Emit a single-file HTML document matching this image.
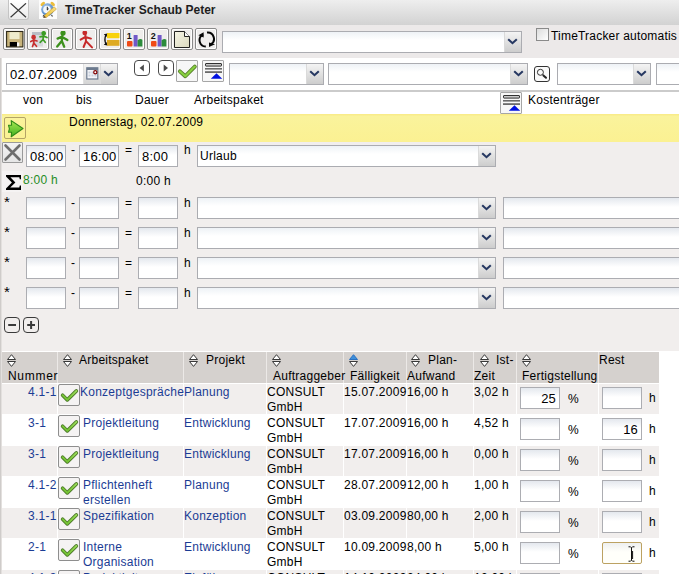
<!DOCTYPE html><html><head><meta charset="utf-8"><style>
*{box-sizing:border-box;margin:0;padding:0}
html,body{width:679px;height:574px;overflow:hidden;background:#F1EEED;font-family:"Liberation Sans",sans-serif;font-size:12px;color:#000;position:relative}
.a{position:absolute}
.t{position:absolute;white-space:nowrap;line-height:14px;letter-spacing:0.25px}
#title{left:0;top:0;width:679px;height:25px;background:linear-gradient(#EEEEEE,#D2D2D2)}
#tool{left:0;top:25px;width:679px;height:33px;background:#ECE9E9}
#daterow{left:0;top:58px;width:679px;height:32px;background:#FFFFFF}
#hline{left:0;top:90px;width:679px;height:2px;background:#CBCBCB}
#hdr{left:0;top:92px;width:679px;height:22px;background:#fff}
#yel{left:0;top:114px;width:679px;height:28px;background:linear-gradient(#F9EC8A 0,#F9EC8A 1px,#FAF39C 2px,#FBF192)}
#lowbg{left:0;top:351px;width:679px;height:223px;background:#fff}
#ledge{left:0;top:58px;width:2px;height:516px;background:linear-gradient(90deg,#CFCCCA 0,#CFCCCA 1px,#E3E0DE 1px)}
.btn{position:absolute;width:22px;height:22px;border:1px solid #8A8A8A;border-radius:2px;background:#EFEDEC;box-shadow:inset 0 0 0 1px #fff}
.btn svg{position:absolute;left:2px;top:2px}
.rbtn{position:absolute;width:16px;height:16px;border:1px solid #4A4A4A;border-radius:4px;background:transparent}
.rbtn svg{position:absolute;left:0;top:0}
.combo{position:absolute;height:22px;border:1px solid #ABACB1;background:linear-gradient(#EEF2F6,#FFFFFF 40%)}
.combo .dd{position:absolute;right:0;top:0;width:17px;height:100%;background:linear-gradient(#F4F4F4,#CDCDCD);border-left:1px solid #DADADA}
.combo .dd svg{position:absolute;left:2px;top:6px}
.inp{position:absolute;width:40px;height:22px;border:1px solid #ACADB2;background:linear-gradient(#E4E8EE,#FFFFFF 45%)}
.th{position:absolute;top:352px;height:31px;background:#D5D1CE}
.cell{position:absolute;height:30px}
.lnk{color:#1B3C94}
.chk{position:absolute;width:22px;height:22px;border:1px solid #8E8E8E;border-radius:2px;background:#F5F3F3}
.chk svg{position:absolute;left:-1px;top:-1px}
</style></head><body>
<div class="a" id="title"></div>
<div class="a" id="tool"></div>
<div class="a" id="daterow"></div>
<div class="a" id="hline"></div>
<div class="a" id="hdr"></div>
<div class="a" id="yel"></div>
<div class="a" id="lowbg"></div>
<div class="a" id="ledge"></div>
<div class="a" style="left:8px;top:0;width:21px;height:20px;border:1px solid #C4C4C4;border-top:none;border-radius:0 0 3px 3px;background:linear-gradient(#FFFFFF,#EBEBEB)">
<svg class="a" style="left:1px;top:3px" width="17" height="15" viewBox="0 0 17 15"><path d="M0.6 0.3L16 14.2M16 0.3L0.6 14.2" stroke="#3A3A3A" stroke-width="1.2"/></svg></div>
<div class="a" style="left:39px;top:0;width:18px;height:19px;background:#FCFCFC">
<svg class="a" style="left:0;top:0" width="18" height="19" viewBox="0 0 18 19">
<defs><radialGradient id="cg" cx=".4" cy=".35" r=".7"><stop offset="0" stop-color="#B8D4F0"/><stop offset="1" stop-color="#3E78C0"/></radialGradient>
<linearGradient id="pg" x1="0" y1="1" x2="1" y2="0"><stop offset="0" stop-color="#F0C030"/><stop offset="1" stop-color="#F8E088"/></linearGradient></defs>
<ellipse cx="3.8" cy="4" rx="2.6" ry="1.5" transform="rotate(-40 3.8 4)" fill="#EDBE3C"/>
<ellipse cx="13.7" cy="4" rx="2.6" ry="1.5" transform="rotate(40 13.7 4)" fill="#EDBE3C"/>
<path d="M4 16.5L5 15M13.5 16.5L12.5 15" stroke="#444" stroke-width="1.2"/>
<circle cx="8.5" cy="9.6" r="6.3" fill="url(#cg)"/>
<circle cx="8" cy="9.6" r="3.8" fill="#F4F8FC"/>
<path d="M8.3 6.8V10L9.6 8.8" stroke="#222" stroke-width="1" fill="none"/>
<path d="M5 15.8L15.2 6.8L17.4 9.2L7.3 17.6Z" fill="url(#pg)" stroke="#C89A30" stroke-width=".6"/>
<path d="M5 15.8L4.2 18L7.3 17.6Z" fill="#5A4020"/>
</svg></div>
<div class="t" style="left:65px;top:3px;font-weight:bold;font-size:12px;color:#1E1E1E;letter-spacing:0">TimeTracker Schaub Peter</div>
<div class="btn" style="left:3px;top:28px"><svg width="18" height="18" viewBox="0 0 18 18"><rect x="0.6" y="0.5" width="16.3" height="15.4" fill="#C8B47C" stroke="#2E2818" stroke-width="1.1"/><rect x="3.5" y="1.1" width="10" height="7" fill="#EFEBCD"/><rect x="3.8" y="11" width="7.2" height="4.6" fill="#000"/><rect x="11" y="11.5" width="2.3" height="3.8" fill="#F6F6F6"/></svg></div>
<div class="btn" style="left:27px;top:28px"><svg width="18" height="18" viewBox="0 0 18 18"><rect x="2" y="1" width="11" height="14.5" fill="#D6D8DC"/><rect x="2" y="1" width="11" height="3" fill="#B8BCC4"/><g stroke="#C83030" stroke-width="1.7" fill="none" stroke-linecap="round" stroke-linejoin="round"><circle cx="3.6" cy="6.2" r="1.5" fill="#C83030"/><path d="M3.8 7.5V12L2.5 15.5M3.8 12L6.5 15.3M0.8 10.5L3.8 9L7 10"/></g><g stroke="#3C9C24" stroke-width="1.7" fill="none" stroke-linecap="round" stroke-linejoin="round"><circle cx="13.7" cy="2.3" r="1.5" fill="#3C9C24"/><path d="M13.6 3.6L13 8.5L10.2 11.3M13 8.5L15.2 11.3M10 5.8L13.5 5L17 6.5"/></g></svg></div>
<div class="btn" style="left:51px;top:28px"><svg width="18" height="18" viewBox="0 0 18 18"><g stroke="#3C901C" stroke-width="2.3" fill="none" stroke-linecap="round" stroke-linejoin="round"><circle cx="9" cy="2.1" r="1.5" fill="#3C901C"/><path d="M8.4 4.5L7.8 10L3.2 15.6M7.8 10L9 12.8L10.2 15.8M3.6 7.6L7.6 5.8L13.4 9"/></g></svg></div>
<div class="btn" style="left:75px;top:28px"><svg width="18" height="18" viewBox="0 0 18 18"><g stroke="#C62A2A" stroke-width="2" fill="none" stroke-linecap="round" stroke-linejoin="round"><circle cx="6.8" cy="1.9" r="1.4" fill="#C62A2A"/><path d="M7.4 4.2L8 10.2L5.6 16M8 10.2L10.2 12.4L14 16.4M2.6 8.6L7.4 6L13 7.6"/></g></svg></div>
<div class="btn" style="left:99px;top:28px"><svg width="18" height="18" viewBox="0 0 18 18"><rect x="5" y="2" width="12.5" height="5.2" fill="#F8D20C"/><rect x="5" y="9" width="12.5" height="5.8" fill="#DEAA22"/><path d="M4.2 3.5Q1.6 8.5 4.2 13.5" stroke="#111" stroke-width="1.3" fill="none"/><path d="M1.8 3.2L5.2 2.6L4.6 6Z M1.8 13.8L5.2 14.4L4.6 11Z" fill="#111"/></svg></div>
<div class="btn" style="left:123px;top:28px"><svg width="18" height="18" viewBox="0 0 18 18"><text x="0.8" y="7.5" font-family="Liberation Sans" font-weight="bold" font-size="9" fill="#111">1</text><rect x="1" y="10" width="5.5" height="5.5" rx="1" fill="#F04A16"/><rect x="7.6" y="4" width="4" height="11.5" rx=".5" fill="#7058C8"/><path d="M11.6 9.2Q14.5 7 16.4 8.8V15.5H11.6Z" fill="#2C8C3C"/></svg></div>
<div class="btn" style="left:147px;top:28px"><svg width="18" height="18" viewBox="0 0 18 18"><text x="0.8" y="7.5" font-family="Liberation Sans" font-weight="bold" font-size="9" fill="#111">2</text><rect x="1" y="10" width="5.5" height="5.5" rx="1" fill="#F04A16"/><rect x="7.6" y="4" width="4" height="11.5" rx=".5" fill="#7058C8"/><path d="M11.6 9.2Q14.5 7 16.4 8.8V15.5H11.6Z" fill="#2C8C3C"/></svg></div>
<div class="btn" style="left:171px;top:28px"><svg width="18" height="18" viewBox="0 0 18 18"><defs><linearGradient id="dg" x1="0" y1="0" x2="1" y2="1"><stop offset="0" stop-color="#F6F5E6"/><stop offset="1" stop-color="#DAD8BE"/></linearGradient></defs><path d="M0.5 0.5H10.5L15.5 5.5V16.5H0.5Z" fill="url(#dg)" stroke="#222" stroke-width="1"/><path d="M10.5 0.5V5.5H15.5" fill="#FAFAFA" stroke="#222" stroke-width="1"/></svg></div>
<div class="btn" style="left:195px;top:28px"><svg width="18" height="18" viewBox="0 0 18 18"><g fill="none" stroke="#050505" stroke-width="2"><path d="M5.2 3.6A6.3 6.3 0 0 0 7.8 15.6"/><path d="M9 1.6A6.3 6.3 0 0 1 13 13.2"/></g><path d="M0.4 4.2L5.6 1.2L5.6 6.6Z" fill="#050505"/><path d="M11 11.5L17 13.3L11 16Z" fill="#050505"/></svg></div>
<div class="combo" style="left:222px;top:31px;width:300px;height:22px"><div class="dd"><svg width="11" height="7" viewBox="0 0 11 7"><path d="M1.2 1.3L5.5 5.2L9.8 1.3" stroke="#263862" stroke-width="2.1" fill="none"/></svg></div></div>
<div class="a" style="left:536px;top:28px;width:13px;height:13px;border:1px solid #8A8A8A;background:linear-gradient(135deg,#DCDCDC,#FFFFFF)"></div>
<div class="t" style="left:551px;top:29px;letter-spacing:0.2px">TimeTracker automatis</div>
<div class="combo" style="left:6px;top:63px;width:112px;height:22px;background:#fff"><div class="t" style="left:3px;top:4px;font-size:13px;letter-spacing:0.2px">02.07.2009</div><div class="a" style="left:76px;top:0;width:17px;height:20px;background:linear-gradient(#F4F4F4,#D4D4D4);border-left:1px solid #E0E0E0"><svg style="position:absolute;left:2px;top:3px" width="13" height="13" viewBox="0 0 13 13"><rect x="0.8" y="0.8" width="11" height="11.2" fill="#F4F6FA" stroke="#6C7A8E" stroke-width="1.2"/><rect x="0.8" y="0.8" width="11" height="2.2" fill="#6C7A8E"/><g fill="#C8D0DC"><rect x="2.5" y="4.5" width="2" height="2"/><rect x="5.5" y="4.5" width="2" height="2"/><rect x="2.5" y="7.5" width="2" height="2"/><rect x="5.5" y="7.5" width="2" height="2"/><rect x="8.5" y="7.5" width="2" height="2"/></g><circle cx="9.3" cy="5.2" r="1.6" fill="#fff" stroke="#800000" stroke-width="1.2"/></svg></div><div class="dd"><svg width="11" height="7" viewBox="0 0 11 7"><path d="M1.2 1.3L5.5 5.2L9.8 1.3" stroke="#263862" stroke-width="2.1" fill="none"/></svg></div></div>
<div class="rbtn" style="left:134px;top:60px"><svg width="16" height="16" viewBox="0 0 16 16"><path d="M4.6 6.9L8.9 3.4V10.4Z" fill="#4A4A4A"/></svg></div>
<div class="rbtn" style="left:158px;top:60px"><svg width="16" height="16" viewBox="0 0 16 16"><path d="M9 6.9L4.7 3.4V10.4Z" fill="#4A4A4A"/></svg></div>
<div class="a" style="left:176px;top:60px;width:22px;height:22px;border:1px solid #A6A6A6;border-radius:1px;background:#F7F7F7"><svg style="position:absolute;left:-1px;top:-1px" width="22" height="22" viewBox="0 0 22 22"><path d="M3.9 11.4L9.3 16.2L18.8 6.6" stroke="#567E2A" stroke-width="3.9" fill="none" stroke-linecap="round" stroke-linejoin="round"/><path d="M3.9 11.4L9.3 16.2L18.8 6.6" stroke="#88D040" stroke-width="2.2" fill="none" stroke-linecap="round" stroke-linejoin="round"/></svg></div>
<div class="a" style="left:202px;top:60px;width:22px;height:22px;border:1px solid #A6A6A6;border-radius:1px;background:#F7F7F7"><svg style="position:absolute;left:-1px;top:-1px" width="22" height="22" viewBox="0 0 22 22"><rect x="3.5" y="3.5" width="16" height="2.6" rx=".5" fill="#C8C8C8" stroke="#303030" stroke-width="1"/><rect x="3" y="8" width="17" height="1.6" fill="#6A6A6A"/><rect x="3" y="11.2" width="17" height="1.8" fill="#6A6A6A"/><path d="M8.8 18.8L14.5 13.3L20.2 18.8Z" fill="#0010E0"/></svg></div>
<div class="combo" style="left:229px;top:63px;width:95px;height:22px"><div class="dd"><svg width="11" height="7" viewBox="0 0 11 7"><path d="M1.2 1.3L5.5 5.2L9.8 1.3" stroke="#263862" stroke-width="2.1" fill="none"/></svg></div></div>
<div class="combo" style="left:328px;top:63px;width:200px;height:22px"><div class="dd"><svg width="11" height="7" viewBox="0 0 11 7"><path d="M1.2 1.3L5.5 5.2L9.8 1.3" stroke="#263862" stroke-width="2.1" fill="none"/></svg></div></div>
<div class="rbtn" style="left:534px;top:66px;border-color:#333;background:#FAFAFA;border-radius:3px"><svg width="16" height="16" viewBox="0 0 16 16"><circle cx="5.4" cy="5.3" r="3" fill="none" stroke="#333" stroke-width="1"/><path d="M8.4 8.4L11 10.8" stroke="#222" stroke-width="2" stroke-linecap="round"/></svg></div>
<div class="combo" style="left:557px;top:63px;width:94px;height:22px"><div class="dd"><svg width="11" height="7" viewBox="0 0 11 7"><path d="M1.2 1.3L5.5 5.2L9.8 1.3" stroke="#263862" stroke-width="2.1" fill="none"/></svg></div></div>
<div class="combo" style="left:656px;top:63px;width:40px;height:22px"></div>
<div class="t" style="left:23px;top:93px;">von</div>
<div class="t" style="left:76px;top:93px;">bis</div>
<div class="t" style="left:135px;top:93px;">Dauer</div>
<div class="t" style="left:194px;top:93px;">Arbeitspaket</div>
<div class="a" style="left:500px;top:92px;width:22px;height:22px;border:1px solid #A6A6A6;border-radius:1px;background:#F7F7F7"><svg style="position:absolute;left:-1px;top:-1px" width="22" height="22" viewBox="0 0 22 22"><rect x="3.5" y="3.5" width="16" height="2.6" rx=".5" fill="#C8C8C8" stroke="#303030" stroke-width="1"/><rect x="3" y="8" width="17" height="1.6" fill="#6A6A6A"/><rect x="3" y="11.2" width="17" height="1.8" fill="#6A6A6A"/><path d="M8.8 18.8L14.5 13.3L20.2 18.8Z" fill="#0010E0"/></svg></div>
<div class="t" style="left:528px;top:93px;">Kostenträger</div>
<div class="a" style="left:4px;top:117px;width:22px;height:22px;border:1px solid #B4A466;border-radius:2px"><svg style="position:absolute;left:-1px;top:-1px" width="22" height="22" viewBox="0 0 22 22"><defs><linearGradient id="ag" x1="0" y1="0" x2="0" y2="1"><stop offset="0" stop-color="#A8E850"/><stop offset="1" stop-color="#40B020"/></linearGradient></defs><path d="M4.5 8.2H7.6L7.2 3.6L19 11.5L7.2 19.8L7.6 15.2H4.5L5.4 11.8Z" fill="url(#ag)" stroke="#2E8A18" stroke-width="1.1" stroke-linejoin="round"/></svg></div>
<div class="t" style="left:69px;top:115px;">Donnerstag, 02.07.2009</div>
<div class="a" style="left:2px;top:142px;width:21px;height:21px;border:1px solid #9A9A9A;border-radius:1px;background:linear-gradient(#F2F2F2,#E6E6E6)"><svg style="position:absolute;left:-1px;top:-1px" width="21" height="21" viewBox="0 0 21 21"><path d="M3.5 3.5L17.5 17.5M17.5 3.5L3.5 17.5" stroke="#6E6E6E" stroke-width="2.6" stroke-linecap="round"/></svg></div>
<div class="a" style="left:2px;top:171px;width:21px;height:21px;background:#F5F3F3"></div>
<svg class="a" style="left:5px;top:174px" width="17" height="17" viewBox="0 0 17 17"><path d="M1 1H16V5.2H14.8L14.3 3.3H5.4L10.4 8.4L5.2 13.6H14.3L14.8 11.6H16V15.9H1V14.4L6.9 8.4L1 2.4Z" fill="#000"/></svg>
<div class="inp" style="left:26px;top:145px;width:40px;height:22px;"><div class="t" style="left:3px;top:4px;font-size:13px;letter-spacing:0.2px">08:00</div></div>
<div class="t" style="left:71px;top:143px;">-</div>
<div class="inp" style="left:79px;top:145px;width:40px;height:22px;"><div class="t" style="left:3px;top:4px;font-size:13px;letter-spacing:0.2px">16:00</div></div>
<div class="t" style="left:125px;top:143px;">=</div>
<div class="inp" style="left:138px;top:145px;width:40px;height:22px;"><div class="t" style="left:3px;top:4px;font-size:13px;letter-spacing:0.2px">8:00</div></div>
<div class="t" style="left:184px;top:143px;">h</div>
<div class="combo" style="left:197px;top:145px;width:299px;height:22px"><div class="t" style="left:2px;top:3px">Urlaub</div><div class="dd"><svg width="11" height="7" viewBox="0 0 11 7"><path d="M1.2 1.3L5.5 5.2L9.8 1.3" stroke="#263862" stroke-width="2.1" fill="none"/></svg></div></div>
<div class="t" style="left:23px;top:173px;color:#268C26">8:00 h</div>
<div class="t" style="left:136px;top:174px;">0:00 h</div>
<div class="t" style="left:4px;top:195px;font-size:15px">*</div>
<div class="inp" style="left:26px;top:197px;width:40px;height:22px;"></div>
<div class="t" style="left:71px;top:196px;">-</div>
<div class="inp" style="left:79px;top:197px;width:40px;height:22px;"></div>
<div class="t" style="left:125px;top:196px;">=</div>
<div class="inp" style="left:138px;top:197px;width:40px;height:22px;"></div>
<div class="t" style="left:184px;top:196px;">h</div>
<div class="combo" style="left:197px;top:197px;width:299px;height:22px"><div class="dd"><svg width="11" height="7" viewBox="0 0 11 7"><path d="M1.2 1.3L5.5 5.2L9.8 1.3" stroke="#263862" stroke-width="2.1" fill="none"/></svg></div></div>
<div class="inp" style="left:503px;top:197px;width:200px;height:22px"></div>
<div class="t" style="left:4px;top:225px;font-size:15px">*</div>
<div class="inp" style="left:26px;top:227px;width:40px;height:22px;"></div>
<div class="t" style="left:71px;top:226px;">-</div>
<div class="inp" style="left:79px;top:227px;width:40px;height:22px;"></div>
<div class="t" style="left:125px;top:226px;">=</div>
<div class="inp" style="left:138px;top:227px;width:40px;height:22px;"></div>
<div class="t" style="left:184px;top:226px;">h</div>
<div class="combo" style="left:197px;top:227px;width:299px;height:22px"><div class="dd"><svg width="11" height="7" viewBox="0 0 11 7"><path d="M1.2 1.3L5.5 5.2L9.8 1.3" stroke="#263862" stroke-width="2.1" fill="none"/></svg></div></div>
<div class="inp" style="left:503px;top:227px;width:200px;height:22px"></div>
<div class="t" style="left:4px;top:255px;font-size:15px">*</div>
<div class="inp" style="left:26px;top:257px;width:40px;height:22px;"></div>
<div class="t" style="left:71px;top:256px;">-</div>
<div class="inp" style="left:79px;top:257px;width:40px;height:22px;"></div>
<div class="t" style="left:125px;top:256px;">=</div>
<div class="inp" style="left:138px;top:257px;width:40px;height:22px;"></div>
<div class="t" style="left:184px;top:256px;">h</div>
<div class="combo" style="left:197px;top:257px;width:299px;height:22px"><div class="dd"><svg width="11" height="7" viewBox="0 0 11 7"><path d="M1.2 1.3L5.5 5.2L9.8 1.3" stroke="#263862" stroke-width="2.1" fill="none"/></svg></div></div>
<div class="inp" style="left:503px;top:257px;width:200px;height:22px"></div>
<div class="t" style="left:4px;top:285px;font-size:15px">*</div>
<div class="inp" style="left:26px;top:287px;width:40px;height:22px;"></div>
<div class="t" style="left:71px;top:286px;">-</div>
<div class="inp" style="left:79px;top:287px;width:40px;height:22px;"></div>
<div class="t" style="left:125px;top:286px;">=</div>
<div class="inp" style="left:138px;top:287px;width:40px;height:22px;"></div>
<div class="t" style="left:184px;top:286px;">h</div>
<div class="combo" style="left:197px;top:287px;width:299px;height:22px"><div class="dd"><svg width="11" height="7" viewBox="0 0 11 7"><path d="M1.2 1.3L5.5 5.2L9.8 1.3" stroke="#263862" stroke-width="2.1" fill="none"/></svg></div></div>
<div class="inp" style="left:503px;top:287px;width:200px;height:22px"></div>
<div class="rbtn" style="left:4px;top:317px;border-color:#3A3A3A;background:transparent"><svg width="16" height="16" viewBox="0 0 16 16"><rect x="3.2" y="6" width="7.8" height="2" fill="#3A3A3A"/></svg></div>
<div class="rbtn" style="left:23px;top:317px;border-color:#3A3A3A;background:transparent"><svg width="16" height="16" viewBox="0 0 16 16"><rect x="3.2" y="6" width="7.8" height="2" fill="#3A3A3A"/><rect x="6.1" y="3" width="2" height="8" fill="#3A3A3A"/></svg></div>
<div class="th" style="left:2px;width:55px"></div>
<div class="th" style="left:58px;width:125px"></div>
<div class="th" style="left:184px;width:82px"></div>
<div class="th" style="left:267px;width:76px"></div>
<div class="th" style="left:344px;width:62px"></div>
<div class="th" style="left:407px;width:66px"></div>
<div class="th" style="left:474px;width:42px"></div>
<div class="th" style="left:517px;width:81px"></div>
<div class="th" style="left:599px;width:60px"></div>
<div class="a" style="left:57px;top:352px;width:1px;height:31px;background:#ECE9E7"></div>
<div class="a" style="left:183px;top:352px;width:1px;height:31px;background:#ECE9E7"></div>
<div class="a" style="left:266px;top:352px;width:1px;height:31px;background:#ECE9E7"></div>
<div class="a" style="left:343px;top:352px;width:1px;height:31px;background:#ECE9E7"></div>
<div class="a" style="left:406px;top:352px;width:1px;height:31px;background:#ECE9E7"></div>
<div class="a" style="left:473px;top:352px;width:1px;height:31px;background:#ECE9E7"></div>
<div class="a" style="left:516px;top:352px;width:1px;height:31px;background:#ECE9E7"></div>
<div class="a" style="left:598px;top:352px;width:1px;height:31px;background:#ECE9E7"></div>
<svg class="a" style="left:7px;top:354px" width="10" height="14" viewBox="0 0 10 14"><path d="M0.5 5.5L4.5 0.7L8.5 5.5Z" fill="#FFFFFF" stroke="#383838" stroke-width="1"/><path d="M0.5 7.5L4.5 12.4L8.5 7.5Z" fill="#FFFFFF" stroke="#383838" stroke-width="1"/></svg>
<div class="t" style="left:8px;top:369px;letter-spacing:0.7px">Nummer</div>
<svg class="a" style="left:63px;top:354px" width="10" height="14" viewBox="0 0 10 14"><path d="M0.5 5.5L4.5 0.7L8.5 5.5Z" fill="#FFFFFF" stroke="#383838" stroke-width="1"/><path d="M0.5 7.5L4.5 12.4L8.5 7.5Z" fill="#FFFFFF" stroke="#383838" stroke-width="1"/></svg>
<div class="t" style="left:79px;top:353px;">Arbeitspaket</div>
<svg class="a" style="left:189px;top:354px" width="10" height="14" viewBox="0 0 10 14"><path d="M0.5 5.5L4.5 0.7L8.5 5.5Z" fill="#FFFFFF" stroke="#383838" stroke-width="1"/><path d="M0.5 7.5L4.5 12.4L8.5 7.5Z" fill="#FFFFFF" stroke="#383838" stroke-width="1"/></svg>
<div class="t" style="left:206px;top:353px;">Projekt</div>
<svg class="a" style="left:272px;top:354px" width="10" height="14" viewBox="0 0 10 14"><path d="M0.5 5.5L4.5 0.7L8.5 5.5Z" fill="#FFFFFF" stroke="#383838" stroke-width="1"/><path d="M0.5 7.5L4.5 12.4L8.5 7.5Z" fill="#FFFFFF" stroke="#383838" stroke-width="1"/></svg>
<div class="t" style="left:273px;top:369px;">Auftraggeber</div>
<svg class="a" style="left:349px;top:354px" width="10" height="14" viewBox="0 0 10 14"><path d="M0.5 5.5L4.5 0.7L8.5 5.5Z" fill="#3E8FDA" stroke="#2A70C0" stroke-width="1"/><path d="M0.5 7.5L4.5 12.4L8.5 7.5Z" fill="#FFFFFF" stroke="#383838" stroke-width="1"/></svg>
<div class="t" style="left:350px;top:369px;">Fälligkeit</div>
<svg class="a" style="left:411px;top:354px" width="10" height="14" viewBox="0 0 10 14"><path d="M0.5 5.5L4.5 0.7L8.5 5.5Z" fill="#FFFFFF" stroke="#383838" stroke-width="1"/><path d="M0.5 7.5L4.5 12.4L8.5 7.5Z" fill="#FFFFFF" stroke="#383838" stroke-width="1"/></svg>
<div class="t" style="left:428px;top:353px;">Plan-</div>
<div class="t" style="left:407px;top:369px;">Aufwand</div>
<svg class="a" style="left:480px;top:354px" width="10" height="14" viewBox="0 0 10 14"><path d="M0.5 5.5L4.5 0.7L8.5 5.5Z" fill="#FFFFFF" stroke="#383838" stroke-width="1"/><path d="M0.5 7.5L4.5 12.4L8.5 7.5Z" fill="#FFFFFF" stroke="#383838" stroke-width="1"/></svg>
<div class="t" style="left:496px;top:353px;">Ist-</div>
<div class="t" style="left:474px;top:369px;">Zeit</div>
<svg class="a" style="left:522px;top:354px" width="10" height="14" viewBox="0 0 10 14"><path d="M0.5 5.5L4.5 0.7L8.5 5.5Z" fill="#FFFFFF" stroke="#383838" stroke-width="1"/><path d="M0.5 7.5L4.5 12.4L8.5 7.5Z" fill="#FFFFFF" stroke="#383838" stroke-width="1"/></svg>
<div class="t" style="left:522px;top:369px;">Fertigstellung</div>
<div class="t" style="left:599px;top:353px;">Rest</div>
<div class="cell" style="left:2px;top:384px;width:55px;height:30px;background:#F1EEED"></div>
<div class="cell" style="left:58px;top:384px;width:125px;height:30px;background:#F1EEED"></div>
<div class="cell" style="left:184px;top:384px;width:82px;height:30px;background:#F1EEED"></div>
<div class="cell" style="left:267px;top:384px;width:76px;height:30px;background:#F1EEED"></div>
<div class="cell" style="left:344px;top:384px;width:62px;height:30px;background:#F1EEED"></div>
<div class="cell" style="left:407px;top:384px;width:66px;height:30px;background:#F1EEED"></div>
<div class="cell" style="left:474px;top:384px;width:42px;height:30px;background:#F1EEED"></div>
<div class="cell" style="left:517px;top:384px;width:81px;height:30px;background:#F1EEED"></div>
<div class="cell" style="left:599px;top:384px;width:60px;height:30px;background:#F1EEED"></div>
<div class="t" style="left:28px;top:385px;color:#1B3C94">4.1-1</div>
<div class="chk" style="left:58px;top:384px"><svg width="22" height="22" viewBox="0 0 22 22"><defs><linearGradient id="kg" x1="0" y1="1" x2="1" y2="0"><stop offset="0" stop-color="#6CC02C"/><stop offset="1" stop-color="#9ADC58"/></linearGradient></defs><path d="M4.6 11.2L9.3 15.9L18.4 6.9" stroke="#4E7A2A" stroke-width="3.6" fill="none" stroke-linecap="round" stroke-linejoin="round"/><path d="M4.6 11.2L9.3 15.9L18.4 6.9" stroke="url(#kg)" stroke-width="1.9" fill="none" stroke-linecap="round" stroke-linejoin="round"/></svg></div>
<div class="t" style="left:80px;top:385px;color:#1B3C94">Konzeptgespräche</div>
<div class="t" style="left:184px;top:385px;color:#1B3C94">Planung</div>
<div class="t" style="left:267px;top:385px;">CONSULT</div>
<div class="t" style="left:267px;top:400px;">GmbH</div>
<div class="t" style="left:344px;top:385px;">15.07.2009</div>
<div class="t" style="left:407px;top:385px;">16,00 h</div>
<div class="t" style="left:474px;top:385px;">3,02 h</div>
<div class="inp" style="left:520px;top:387px;width:40px;height:22px;"><div class="t" style="right:3px;top:4px;font-size:13px;letter-spacing:0.2px">25</div></div>
<div class="t" style="left:568px;top:392px;">%</div>
<div class="inp" style="left:602px;top:387px;width:40px;height:22px;"></div>
<div class="t" style="left:649px;top:391px;">h</div>
<div class="t" style="left:28px;top:416px;color:#1B3C94">3-1</div>
<div class="chk" style="left:58px;top:415px"><svg width="22" height="22" viewBox="0 0 22 22"><defs><linearGradient id="kg" x1="0" y1="1" x2="1" y2="0"><stop offset="0" stop-color="#6CC02C"/><stop offset="1" stop-color="#9ADC58"/></linearGradient></defs><path d="M4.6 11.2L9.3 15.9L18.4 6.9" stroke="#4E7A2A" stroke-width="3.6" fill="none" stroke-linecap="round" stroke-linejoin="round"/><path d="M4.6 11.2L9.3 15.9L18.4 6.9" stroke="url(#kg)" stroke-width="1.9" fill="none" stroke-linecap="round" stroke-linejoin="round"/></svg></div>
<div class="t" style="left:83px;top:416px;color:#1B3C94">Projektleitung</div>
<div class="t" style="left:184px;top:416px;color:#1B3C94">Entwicklung</div>
<div class="t" style="left:267px;top:416px;">CONSULT</div>
<div class="t" style="left:267px;top:431px;">GmbH</div>
<div class="t" style="left:344px;top:416px;">17.07.2009</div>
<div class="t" style="left:407px;top:416px;">16,00 h</div>
<div class="t" style="left:474px;top:416px;">4,52 h</div>
<div class="inp" style="left:520px;top:418px;width:40px;height:22px;"></div>
<div class="t" style="left:568px;top:423px;">%</div>
<div class="inp" style="left:602px;top:418px;width:40px;height:22px;"><div class="t" style="right:3px;top:4px;font-size:13px;letter-spacing:0.2px">16</div></div>
<div class="t" style="left:649px;top:422px;">h</div>
<div class="cell" style="left:2px;top:446px;width:55px;height:30px;background:#F1EEED"></div>
<div class="cell" style="left:58px;top:446px;width:125px;height:30px;background:#F1EEED"></div>
<div class="cell" style="left:184px;top:446px;width:82px;height:30px;background:#F1EEED"></div>
<div class="cell" style="left:267px;top:446px;width:76px;height:30px;background:#F1EEED"></div>
<div class="cell" style="left:344px;top:446px;width:62px;height:30px;background:#F1EEED"></div>
<div class="cell" style="left:407px;top:446px;width:66px;height:30px;background:#F1EEED"></div>
<div class="cell" style="left:474px;top:446px;width:42px;height:30px;background:#F1EEED"></div>
<div class="cell" style="left:517px;top:446px;width:81px;height:30px;background:#F1EEED"></div>
<div class="cell" style="left:599px;top:446px;width:60px;height:30px;background:#F1EEED"></div>
<div class="t" style="left:28px;top:447px;color:#1B3C94">3-1</div>
<div class="chk" style="left:58px;top:446px"><svg width="22" height="22" viewBox="0 0 22 22"><defs><linearGradient id="kg" x1="0" y1="1" x2="1" y2="0"><stop offset="0" stop-color="#6CC02C"/><stop offset="1" stop-color="#9ADC58"/></linearGradient></defs><path d="M4.6 11.2L9.3 15.9L18.4 6.9" stroke="#4E7A2A" stroke-width="3.6" fill="none" stroke-linecap="round" stroke-linejoin="round"/><path d="M4.6 11.2L9.3 15.9L18.4 6.9" stroke="url(#kg)" stroke-width="1.9" fill="none" stroke-linecap="round" stroke-linejoin="round"/></svg></div>
<div class="t" style="left:83px;top:447px;color:#1B3C94">Projektleitung</div>
<div class="t" style="left:184px;top:447px;color:#1B3C94">Entwicklung</div>
<div class="t" style="left:267px;top:447px;">CONSULT</div>
<div class="t" style="left:267px;top:462px;">GmbH</div>
<div class="t" style="left:344px;top:447px;">17.07.2009</div>
<div class="t" style="left:407px;top:447px;">16,00 h</div>
<div class="t" style="left:474px;top:447px;">0,00 h</div>
<div class="inp" style="left:520px;top:449px;width:40px;height:22px;"></div>
<div class="t" style="left:568px;top:454px;">%</div>
<div class="inp" style="left:602px;top:449px;width:40px;height:22px;"></div>
<div class="t" style="left:649px;top:453px;">h</div>
<div class="t" style="left:28px;top:478px;color:#1B3C94">4.1-2</div>
<div class="chk" style="left:58px;top:477px"><svg width="22" height="22" viewBox="0 0 22 22"><defs><linearGradient id="kg" x1="0" y1="1" x2="1" y2="0"><stop offset="0" stop-color="#6CC02C"/><stop offset="1" stop-color="#9ADC58"/></linearGradient></defs><path d="M4.6 11.2L9.3 15.9L18.4 6.9" stroke="#4E7A2A" stroke-width="3.6" fill="none" stroke-linecap="round" stroke-linejoin="round"/><path d="M4.6 11.2L9.3 15.9L18.4 6.9" stroke="url(#kg)" stroke-width="1.9" fill="none" stroke-linecap="round" stroke-linejoin="round"/></svg></div>
<div class="t" style="left:83px;top:478px;color:#1B3C94">Pflichtenheft</div>
<div class="t" style="left:83px;top:493px;color:#1B3C94">erstellen</div>
<div class="t" style="left:184px;top:478px;color:#1B3C94">Planung</div>
<div class="t" style="left:267px;top:478px;">CONSULT</div>
<div class="t" style="left:267px;top:493px;">GmbH</div>
<div class="t" style="left:344px;top:478px;">28.07.2009</div>
<div class="t" style="left:407px;top:478px;">12,00 h</div>
<div class="t" style="left:474px;top:478px;">1,00 h</div>
<div class="inp" style="left:520px;top:480px;width:40px;height:22px;"></div>
<div class="t" style="left:568px;top:485px;">%</div>
<div class="inp" style="left:602px;top:480px;width:40px;height:22px;"></div>
<div class="t" style="left:649px;top:484px;">h</div>
<div class="cell" style="left:2px;top:508px;width:55px;height:30px;background:#F1EEED"></div>
<div class="cell" style="left:58px;top:508px;width:125px;height:30px;background:#F1EEED"></div>
<div class="cell" style="left:184px;top:508px;width:82px;height:30px;background:#F1EEED"></div>
<div class="cell" style="left:267px;top:508px;width:76px;height:30px;background:#F1EEED"></div>
<div class="cell" style="left:344px;top:508px;width:62px;height:30px;background:#F1EEED"></div>
<div class="cell" style="left:407px;top:508px;width:66px;height:30px;background:#F1EEED"></div>
<div class="cell" style="left:474px;top:508px;width:42px;height:30px;background:#F1EEED"></div>
<div class="cell" style="left:517px;top:508px;width:81px;height:30px;background:#F1EEED"></div>
<div class="cell" style="left:599px;top:508px;width:60px;height:30px;background:#F1EEED"></div>
<div class="t" style="left:28px;top:509px;color:#1B3C94">3.1-1</div>
<div class="chk" style="left:58px;top:508px"><svg width="22" height="22" viewBox="0 0 22 22"><defs><linearGradient id="kg" x1="0" y1="1" x2="1" y2="0"><stop offset="0" stop-color="#6CC02C"/><stop offset="1" stop-color="#9ADC58"/></linearGradient></defs><path d="M4.6 11.2L9.3 15.9L18.4 6.9" stroke="#4E7A2A" stroke-width="3.6" fill="none" stroke-linecap="round" stroke-linejoin="round"/><path d="M4.6 11.2L9.3 15.9L18.4 6.9" stroke="url(#kg)" stroke-width="1.9" fill="none" stroke-linecap="round" stroke-linejoin="round"/></svg></div>
<div class="t" style="left:83px;top:509px;color:#1B3C94">Spezifikation</div>
<div class="t" style="left:184px;top:509px;color:#1B3C94">Konzeption</div>
<div class="t" style="left:267px;top:509px;">CONSULT</div>
<div class="t" style="left:267px;top:524px;">GmbH</div>
<div class="t" style="left:344px;top:509px;">03.09.2009</div>
<div class="t" style="left:407px;top:509px;">80,00 h</div>
<div class="t" style="left:474px;top:509px;">2,00 h</div>
<div class="inp" style="left:520px;top:511px;width:40px;height:22px;"></div>
<div class="t" style="left:568px;top:516px;">%</div>
<div class="inp" style="left:602px;top:511px;width:40px;height:22px;"></div>
<div class="t" style="left:649px;top:515px;">h</div>
<div class="t" style="left:28px;top:540px;color:#1B3C94">2-1</div>
<div class="chk" style="left:58px;top:539px"><svg width="22" height="22" viewBox="0 0 22 22"><defs><linearGradient id="kg" x1="0" y1="1" x2="1" y2="0"><stop offset="0" stop-color="#6CC02C"/><stop offset="1" stop-color="#9ADC58"/></linearGradient></defs><path d="M4.6 11.2L9.3 15.9L18.4 6.9" stroke="#4E7A2A" stroke-width="3.6" fill="none" stroke-linecap="round" stroke-linejoin="round"/><path d="M4.6 11.2L9.3 15.9L18.4 6.9" stroke="url(#kg)" stroke-width="1.9" fill="none" stroke-linecap="round" stroke-linejoin="round"/></svg></div>
<div class="t" style="left:83px;top:540px;color:#1B3C94">Interne</div>
<div class="t" style="left:83px;top:555px;color:#1B3C94">Organisation</div>
<div class="t" style="left:184px;top:540px;color:#1B3C94">Entwicklung</div>
<div class="t" style="left:267px;top:540px;">CONSULT</div>
<div class="t" style="left:267px;top:555px;">GmbH</div>
<div class="t" style="left:344px;top:540px;">10.09.2009</div>
<div class="t" style="left:407px;top:540px;">8,00 h</div>
<div class="t" style="left:474px;top:540px;">5,00 h</div>
<div class="inp" style="left:520px;top:542px;width:40px;height:22px;"></div>
<div class="t" style="left:568px;top:547px;">%</div>
<div class="inp" style="left:602px;top:542px;width:40px;height:22px;border:1.5px solid #BCA262;border-radius:2px;background:linear-gradient(#EEF0F0,#FFFFFA 45%)"><svg style="position:absolute;left:25px;top:3px" width="8" height="16" viewBox="0 0 8 16"><path d="M0.5 0.8H2.5L3.5 1.8L4.5 0.8H6.5M3.5 1.8V14.2M0.5 15.2H2.5L3.5 14.2L4.5 15.2H6.5" stroke="#111" stroke-width="1" fill="none"/><path d="M4.6 5V13" stroke="#111" stroke-width="1"/></svg></div>
<div class="t" style="left:649px;top:546px;">h</div>
<div class="cell" style="left:2px;top:570px;width:55px;height:30px;background:#F1EEED"></div>
<div class="cell" style="left:58px;top:570px;width:125px;height:30px;background:#F1EEED"></div>
<div class="cell" style="left:184px;top:570px;width:82px;height:30px;background:#F1EEED"></div>
<div class="cell" style="left:267px;top:570px;width:76px;height:30px;background:#F1EEED"></div>
<div class="cell" style="left:344px;top:570px;width:62px;height:30px;background:#F1EEED"></div>
<div class="cell" style="left:407px;top:570px;width:66px;height:30px;background:#F1EEED"></div>
<div class="cell" style="left:474px;top:570px;width:42px;height:30px;background:#F1EEED"></div>
<div class="cell" style="left:517px;top:570px;width:81px;height:30px;background:#F1EEED"></div>
<div class="cell" style="left:599px;top:570px;width:60px;height:30px;background:#F1EEED"></div>
<div class="t" style="left:28px;top:571px;color:#1B3C94">4.1-3</div>
<div class="chk" style="left:58px;top:570px"><svg width="22" height="22" viewBox="0 0 22 22"><defs><linearGradient id="kg" x1="0" y1="1" x2="1" y2="0"><stop offset="0" stop-color="#6CC02C"/><stop offset="1" stop-color="#9ADC58"/></linearGradient></defs><path d="M4.6 11.2L9.3 15.9L18.4 6.9" stroke="#4E7A2A" stroke-width="3.6" fill="none" stroke-linecap="round" stroke-linejoin="round"/><path d="M4.6 11.2L9.3 15.9L18.4 6.9" stroke="url(#kg)" stroke-width="1.9" fill="none" stroke-linecap="round" stroke-linejoin="round"/></svg></div>
<div class="t" style="left:83px;top:571px;color:#1B3C94">Projektleitung</div>
<div class="t" style="left:184px;top:571px;color:#1B3C94">Einführung</div>
<div class="t" style="left:267px;top:571px;">CONSULT</div>
<div class="t" style="left:267px;top:586px;">GmbH</div>
<div class="t" style="left:344px;top:571px;">14.10.2009</div>
<div class="t" style="left:407px;top:571px;">24,00 h</div>
<div class="t" style="left:474px;top:571px;">12,00 h</div>
<div class="inp" style="left:520px;top:573px;width:40px;height:22px;"></div>
<div class="t" style="left:568px;top:578px;">%</div>
<div class="inp" style="left:602px;top:573px;width:40px;height:22px;"></div>
<div class="t" style="left:649px;top:577px;">h</div>
</body></html>
